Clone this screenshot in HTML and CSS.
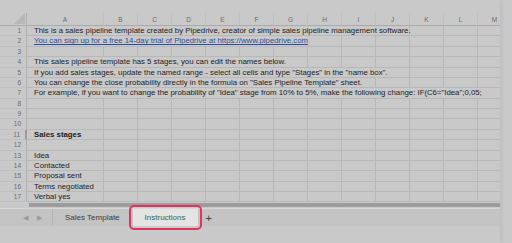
FILE: index.html
```html
<!DOCTYPE html>
<html lang="en">
  <head>
    <meta charset="UTF-8" />
    <meta name="viewport" content="width=device-width, initial-scale=1.0" />
    <title>Sales pipeline template - Instructions</title>
    <link rel="stylesheet" href="styles.css">
  </head>
  <body>
    <div class="window">
      <div class="sheet">
        <div class="grid" id="grid">
          <div class="corner"><span class="corner-mark"></span></div>
        </div>
      </div>
      <div class="hbar"><div class="hbar-fill"></div></div>
      <div class="tabs">
        <span class="arrow">&#9664;</span>
        <span class="arrow">&#9654;</span>
        <div class="tab">Sales Template</div>
        <div class="tab active">Instructions</div>
        <div class="add">+</div>
      </div>
    </div>

    <script>
      // Column letters of the sheet
      var cols = ["A", "B", "C", "D", "E", "F", "G", "H", "I", "J", "K", "L", "M"];

      // Text of the rows, with how many columns the text runs over
      var rows = [
        { t: "This is a sales pipeline template created by Pipedrive, creator of simple sales pipeline management software.", span: 10 },
        { t: "You can sign up for a free 14-day trial of Pipedrive at https://www.pipedrive.com", span: 8, link: true },
        {},
        { t: "This sales pipeline template has 5 stages, you can edit the names below.", span: 6 },
        { t: "If you add sales stages, update the named range - select all cells and type \"Stages\" in the \"name box\".", span: 10 },
        { t: "You can change the close probability directly in the formula on \"Sales Pipeline Template\" sheet.", span: 9 },
        { t: "For example, if you want to change the probability of \"Idea\" stage from 10% to 5%, make the following change: IF(C6=\"Idea\";0,05;", span: 13 },
        {},
        {},
        {},
        { t: "Sales stages", span: 1, bold: true },
        {},
        { t: "Idea", span: 1 },
        { t: "Contacted", span: 1 },
        { t: "Proposal sent", span: 1 },
        { t: "Terms negotiated", span: 1 },
        { t: "Verbal yes", span: 1 }
      ];

      var grid = document.getElementById("grid");
      var html = "";

      for (var c = 0; c < cols.length; c++) {
        html += '<div class="colhead">' + cols[c] + "</div>";
      }

      for (var r = 0; r < rows.length; r++) {
        var row = rows[r];
        var cls = "rownum" + (r === 10 ? " current" : "");
        html += '<div class="' + cls + '">' + (r + 1) + "</div>";
        var used = 0;
        if (row.t) {
          var kind = "cell text";
          if (row.link) kind += " link";
          if (row.bold) kind += " bold";
          html += '<div class="' + kind + '" style="grid-column: span ' + row.span + '">' + row.t.replace(/"/g, "&quot;") + "</div>";
          used = row.span;
        }
        for (var k = used; k < cols.length; k++) {
          html += '<div class="cell"></div>';
        }
      }

      grid.insertAdjacentHTML("beforeend", html);
    </script>
  </body>
</html>
```

FILE: styles.css
```css
body {
  margin: 0;
  background-color: #c9c9c9;
  font-family: "Liberation Sans", Arial, sans-serif;
  color: #222222;
  overflow: hidden;
}

.window {
  width: 500px;
  height: 243px;
  padding-top: 13px;
  box-sizing: border-box;
  overflow: hidden;
  box-shadow: 2px 0 4px rgba(0, 0, 0, 0.06);
}

.sheet {
  height: 190px;
  overflow: hidden;
}

.grid {
  display: grid;
  grid-template-columns: 27px 77px repeat(12, 34px);
  grid-template-rows: 13px;
  grid-auto-rows: 10.375px;
  width: 512px;
}

.corner {
  border-right: 1px solid #b0b0b0;
  border-bottom: 1px solid #aaaaaa;
  box-sizing: border-box;
  display: flex;
  justify-content: flex-end;
  align-items: flex-end;
  padding: 0 1px 1px 0;
}

.corner-mark {
  width: 11px;
  height: 11px;
  background-color: #b8b8b8;
  clip-path: polygon(100% 0, 100% 100%, 0 100%);
}

.colhead {
  font-size: 6.5px;
  color: #6a6a6a;
  text-align: center;
  line-height: 13px;
  border-right: 1px solid #c0c0c0;
  border-bottom: 1px solid #aaaaaa;
  box-sizing: border-box;
}

.rownum {
  font-size: 6.5px;
  color: #6a6a6a;
  text-align: right;
  padding-right: 5px;
  line-height: 10px;
  border-right: 1px solid #b0b0b0;
  border-bottom: 1px solid #c0c0c0;
  box-sizing: border-box;
}

.rownum.current {
  border-right: 2px solid #9a9a9a;
}

.cell {
  border-right: 1px solid #b8b8b8;
  border-bottom: 1px solid #b8b8b8;
  box-sizing: border-box;
}

.text {
  font-size: 7.8px;
  line-height: 10.5px;
  padding-left: 7px;
  white-space: nowrap;
}

.link {
  color: #2c4f9e;
  text-decoration: underline;
}

.bold {
  font-weight: bold;
}

.hbar {
  height: 5px;
  padding-left: 29px;
  border-bottom: 1px solid #d8d8d8;
}

.hbar-fill {
  height: 4px;
  background-color: #9c9c9c;
}

.tabs {
  display: flex;
  align-items: center;
  height: 17px;
  background-color: #c3c3c3;
  font-size: 8px;
  color: #3d3d3d;
}

.arrow {
  font-size: 7px;
  color: #9a9a9a;
  width: 14px;
  text-align: center;
}

.arrow:first-child {
  margin-left: 18px;
}

.tab {
  height: 17px;
  line-height: 17px;
  border-left: 1px solid #b4b4b4;
  padding: 0 12px;
}

.tab:nth-of-type(1) {
  margin-left: 6px;
}

.tab.active {
  width: 65px;
  box-sizing: border-box;
  padding: 0;
  text-align: center;
  margin-left: 1px;
  background-color: #e4e4e4;
  color: #2f6a49;
  outline: 2px solid #e3325b;
  outline-offset: 2px;
  border-radius: 1px;
  border-left: none;
}

.add {
  font-size: 11px;
  color: #3d3d3d;
  margin-left: 8px;
}
```
